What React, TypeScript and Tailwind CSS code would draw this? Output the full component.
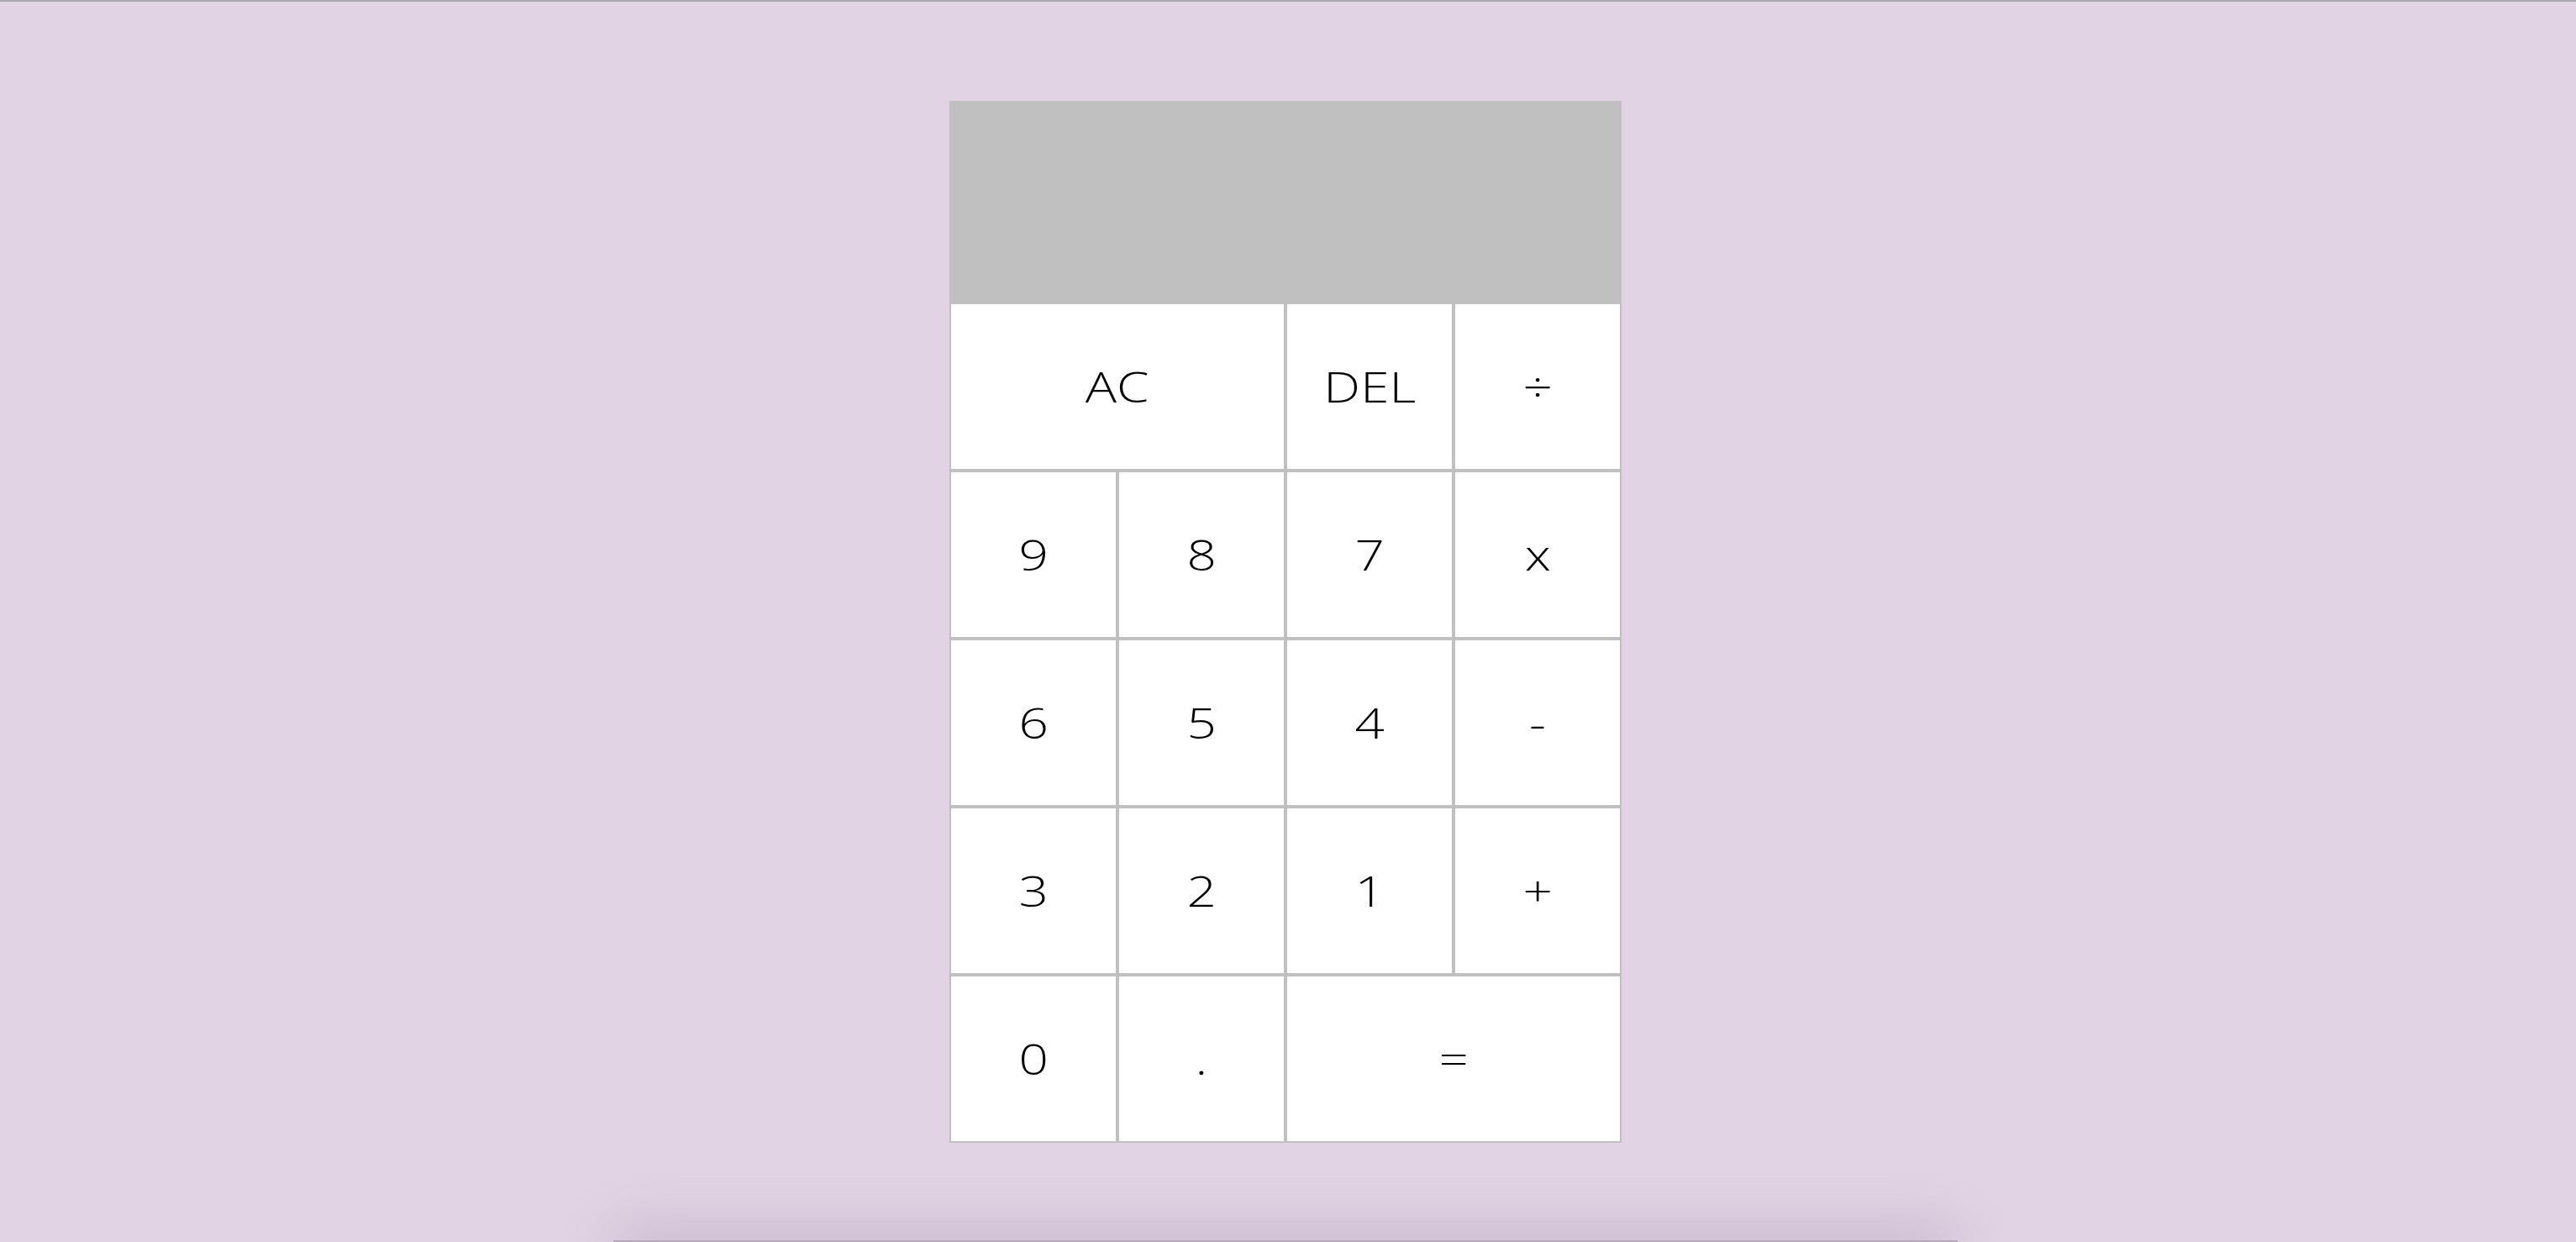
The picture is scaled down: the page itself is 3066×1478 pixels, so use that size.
const keys: { label: string; wide?: boolean }[] = [
  { label: "AC", wide: true },
  { label: "DEL" },
  { label: "÷" },
  { label: "9" },
  { label: "8" },
  { label: "7" },
  { label: "x" },
  { label: "6" },
  { label: "5" },
  { label: "4" },
  { label: "-" },
  { label: "3" },
  { label: "2" },
  { label: "1" },
  { label: "+" },
  { label: "0" },
  { label: "." },
  { label: "=", wide: true },
];

function Key({ label, wide }: { label: string; wide?: boolean }) {
  return (
    <button
      className={
        "flex h-[200px] items-center justify-center border-2 border-[#c0c0c0] bg-white text-[50px] font-light text-black " +
        (wide ? "col-span-2" : "")
      }
    >
      <span className="inline-block scale-x-[1.24] leading-none">{label}</span>
    </button>
  );
}

export default function App() {
  return (
    <div
      className="flex min-h-screen flex-col items-center overflow-hidden border-t-2 border-[#a8a8a8] bg-[#e1d3e4] pt-[118px] pr-[6px]"
      style={{ fontFamily: '"Open Sans", "Liberation Sans", sans-serif' }}
    >
      <div className="grid w-[800px] grid-cols-4">
        <div className="col-span-4 h-[240px] bg-[#c0c0c0]" />
        {keys.map((k) => (
          <Key key={k.label} label={k.label} wide={k.wide} />
        ))}
      </div>
      <div className="mt-[116px] h-[40px] w-[1600px] shrink-0 bg-[#b6a8ba] shadow-[0_-10px_70px_rgba(90,50,100,0.22)]" />
    </div>
  );
}
